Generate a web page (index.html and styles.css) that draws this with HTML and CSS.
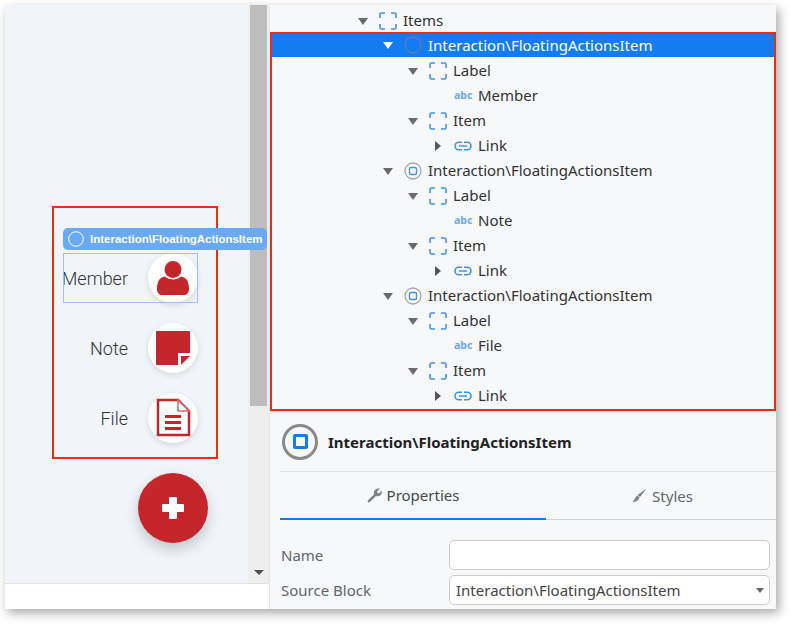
FILE: index.html
```html
<!DOCTYPE html>
<html lang="en">
<head>
    <meta charset="UTF-8">
    <title>Floating Actions</title>
    <link rel="stylesheet" href="styles.css">
</head>
<body>
<svg class="defs" width="0" height="0">
    <symbol id="ico-bracket" viewBox="0 0 18 18">
        <path d="M1 6V2.500A1.500 1.500 0 0 1 2.500 1H6M12 1h3.500A1.500 1.500 0 0 1 17 2.500V6M17 12v3.500a1.500 1.500 0 0 1-1.500 1.500H12M6 17H2.500A1.500 1.500 0 0 1 1 15.500V12" fill="none" stroke="#3f93ee" stroke-width="1.600"/>
    </symbol>
    <symbol id="ico-block" viewBox="0 0 18 18">
        <circle cx="9" cy="9" r="8" fill="none" stroke="#a5a5a5" stroke-width="1.300"/>
        <rect x="5.500" y="5.500" width="7" height="7" rx="1.500" fill="none" stroke="#3f93ee" stroke-width="1.400"/>
    </symbol>
    <symbol id="ico-link" viewBox="0 0 18 18">
        <path d="M8 5.250H4.750a3.750 3.750 0 0 0 0 7.500H8M10 5.250h3.250a3.750 3.750 0 0 1 0 7.500H10M5 9h8" fill="none" stroke="#3f93ee" stroke-width="1.600"/>
    </symbol>
</svg>

<div class="window">
    <div class="left">
        <div class="canvas">
            <div class="stage">
                <div class="action">
                    <span class="action-label">Member</span>
                    <span class="action-btn">
                        <svg width="32" height="34" viewBox="0 0 32 34"><circle cx="16" cy="8.500" r="8.500" fill="#c4262c"/><path d="M0 28c0-7 2.500-12 8-12.500 2.200 2 5 3 8 3s5.800-1 8-3c5.500.5 8 5.500 8 12.500 0 3.500-1.800 6-5 6H5c-3.200 0-5-2.500-5-6z" fill="#c4262c"/></svg>
                    </span>
                </div>
                <div class="action">
                    <span class="action-label">Note</span>
                    <span class="action-btn">
                        <svg width="36" height="36" viewBox="0 0 36 36"><path d="M2 1h32a1 1 0 0 1 1 1v21H23v12H2a1 1 0 0 1-1-1V2a1 1 0 0 1 1-1z" fill="#c4262c"/><path d="M26 26h9l-9 9z" fill="#c4262c"/></svg>
                    </span>
                </div>
                <div class="action">
                    <span class="action-label">File</span>
                    <span class="action-btn">
                        <svg width="36" height="40" viewBox="0 0 36 40"><path d="M3 2h20l11 11v24H3z" fill="#fff" stroke="#c4262c" stroke-width="2.500"/><path d="M23 2v11h11z" fill="#fff" stroke="#d9686c" stroke-width="1.500"/><path d="M10 17h16v3H10zM10 23h16v3H10zM10 29h16v3H10z" fill="#c4262c"/></svg>
                    </span>
                </div>
                <div class="fab">
                    <svg width="24" height="24" viewBox="0 0 24 24"><path d="M9 1h6a1 1 0 0 1 1 1v6h6a1 1 0 0 1 1 1v6a1 1 0 0 1-1 1h-6v6a1 1 0 0 1-1 1H9a1 1 0 0 1-1-1v-6H2a1 1 0 0 1-1-1V9a1 1 0 0 1 1-1h6V2a1 1 0 0 1 1-1z" fill="#fff"/></svg>
                </div>
            </div>
            <div class="scrollbar">
                <div class="thumb"></div>
                <div class="scroll-arrow"></div>
            </div>
        </div>
        <div class="statusbar"></div>
    </div>

    <div class="right">
        <div class="tree">
            <div class="row d0"><i class="arrow down"></i><svg class="ico"><use href="#ico-bracket"/></svg><span>Items</span></div>
            <div class="row d1 selected"><i class="arrow down"></i><svg class="ico" viewBox="0 0 18 18"><circle cx="9" cy="9" r="8" fill="none" stroke="#5c7fae" stroke-width="1.300"/></svg><span>Interaction\FloatingActionsItem</span></div>
            <div class="row d2"><i class="arrow down"></i><svg class="ico"><use href="#ico-bracket"/></svg><span>Label</span></div>
            <div class="row d3"><i class="arrow"></i><b class="abc">abc</b><span>Member</span></div>
            <div class="row d2"><i class="arrow down"></i><svg class="ico"><use href="#ico-bracket"/></svg><span>Item</span></div>
            <div class="row d3"><i class="arrow side"></i><svg class="ico"><use href="#ico-link"/></svg><span>Link</span></div>
            <div class="row d1"><i class="arrow down"></i><svg class="ico"><use href="#ico-block"/></svg><span>Interaction\FloatingActionsItem</span></div>
            <div class="row d2"><i class="arrow down"></i><svg class="ico"><use href="#ico-bracket"/></svg><span>Label</span></div>
            <div class="row d3"><i class="arrow"></i><b class="abc">abc</b><span>Note</span></div>
            <div class="row d2"><i class="arrow down"></i><svg class="ico"><use href="#ico-bracket"/></svg><span>Item</span></div>
            <div class="row d3"><i class="arrow side"></i><svg class="ico"><use href="#ico-link"/></svg><span>Link</span></div>
            <div class="row d1"><i class="arrow down"></i><svg class="ico"><use href="#ico-block"/></svg><span>Interaction\FloatingActionsItem</span></div>
            <div class="row d2"><i class="arrow down"></i><svg class="ico"><use href="#ico-bracket"/></svg><span>Label</span></div>
            <div class="row d3"><i class="arrow"></i><b class="abc">abc</b><span>File</span></div>
            <div class="row d2"><i class="arrow down"></i><svg class="ico"><use href="#ico-bracket"/></svg><span>Item</span></div>
            <div class="row d3"><i class="arrow side"></i><svg class="ico"><use href="#ico-link"/></svg><span>Link</span></div>
        </div>

        <div class="details">
            <div class="details-head">
                <span class="block-icon"><span></span></span>
                <strong>Interaction\FloatingActionsItem</strong>
            </div>
            <div class="tabs">
                <div class="tab active">
                    <svg width="15" height="15" viewBox="0 0 14 14"><path d="M1 13.500 0.500 12l6-6C6 4 6.500 2.500 8 1.300 9.200.4 10.800.2 12 .7L9.500 3l.3 1.700 1.700.3L13.700 2.500c.5 1.500.1 3-1 4-1.200 1.100-2.800 1.400-4.300.9l-6 6z" fill="#7d8288"/></svg>
                    Properties
                </div>
                <div class="tab">
                    <svg width="15" height="15" viewBox="0 0 15 14"><path d="M14.500 0 8 8.500 5.500 6.500zM5 7l2.500 2c-.5 2.500-3.500 4.500-7 4.500C2 12.500 3 9 5 7z" fill="#7d8288"/></svg>
                    Styles
                </div>
            </div>
            <div class="form">
                <div class="field">
                    <label>Name</label>
                    <div class="input"></div>
                </div>
                <div class="field">
                    <label>Source Block</label>
                    <div class="input select">Interaction\FloatingActionsItem<i class="arrow down small"></i></div>
                </div>
            </div>
        </div>
    </div>
</div>

<!-- annotations lying over the window -->
<div class="mark mark-left"></div>
<div class="mark mark-tree"></div>
<div class="sel-box"></div>
<div class="sel-tag">
    <svg width="16" height="16" viewBox="0 0 16 16"><circle cx="8" cy="8" r="7.300" fill="none" stroke="#fff" stroke-width="1"/></svg>
    Interaction\FloatingActionsItem
</div>
</body>
</html>
```

FILE: styles.css
```css
* {
    box-sizing: border-box;
}
html, body {
    margin: 0;
    padding: 0;
    height: 100%;
    overflow: hidden;
    background: #fff;
}
body {
    position: relative;
    font: 15px "Noto Sans", "Open Sans", sans-serif;
    color: #333;
}
.defs {
    position: absolute;
}
.window {
    display: flex;
    margin: 5px 0 0 5px;
    width: 771px;
    height: 604px;
    box-shadow: 3px 4px 10px rgba(0, 0, 0, .35);
    background: #fff;
}

/* left panel */
.left {
    display: flex;
    flex-direction: column;
    width: 265px;
    border-right: 1px solid #e4e6e8;
}
.canvas {
    display: flex;
    height: 579px;
    border-bottom: 1px solid #dfe1e3;
}
.stage {
    flex: 1;
    display: flex;
    flex-direction: column;
    align-items: flex-end;
    justify-content: flex-end;
    gap: 20px;
    padding: 0 50px 40px 0;
    background: #f1f5f9;
}
.action {
    display: flex;
    align-items: center;
    gap: 20px;
    height: 50px;
}
.action-label {
    font: 300 18px Roboto, sans-serif;
    color: #333;
}
.action-btn {
    display: flex;
    align-items: center;
    justify-content: center;
    width: 50px;
    height: 50px;
    border-radius: 50%;
    background: #fff;
    box-shadow: 0 2px 6px rgba(0, 0, 0, .12);
}
.fab {
    display: flex;
    align-items: center;
    justify-content: center;
    margin: 10px -10px 0 0;
    width: 70px;
    height: 70px;
    border-radius: 50%;
    background: #c4262c;
    box-shadow: 0 6px 14px rgba(0, 0, 0, .2);
}
.scrollbar {
    display: flex;
    flex-direction: column;
    justify-content: space-between;
    align-items: center;
    width: 21px;
    padding: 0 2px 8px 2px;
    background: #eee;
}
.thumb {
    width: 17px;
    height: 401px;
    background: #bdbdbd;
}
.scroll-arrow {
    border-left: 5px solid transparent;
    border-right: 5px solid transparent;
    border-top: 5px solid #505050;
}
.statusbar {
    flex: 1;
    background: #fff;
}

/* tree */
.right {
    flex: 1;
    display: flex;
    flex-direction: column;
    background: #f7f8fa;
}
.tree {
    height: 407px;
    padding-top: 3px;
    border-bottom: 1px solid #e4e6e8;
}
.row {
    display: flex;
    align-items: center;
    height: 25px;
    white-space: nowrap;
}
.row span {
    padding-bottom: 2px;
}
.row.d0 { padding-left: 81px; }
.row.d1 { padding-left: 106px; }
.row.d2 { padding-left: 131px; }
.row.d3 { padding-left: 156px; }
.row.selected {
    height: 24px;
    margin-bottom: 1px;
    background: #147cf2;
    color: #fff;
}
.row.selected span {
    padding-bottom: 0;
}
.arrow {
    flex: none;
    display: block;
    width: 25px;
    height: 0;
    position: relative;
}
.arrow.down::before {
    content: "";
    position: absolute;
    left: 7px;
    top: -3px;
    border-left: 5.5px solid transparent;
    border-right: 5.5px solid transparent;
    border-top: 7px solid #6b6b6b;
}
.selected .arrow.down::before {
    border-top-color: #fff;
}
.arrow.side::before {
    content: "";
    position: absolute;
    left: 9px;
    top: -5px;
    border-top: 5px solid transparent;
    border-bottom: 5px solid transparent;
    border-left: 6px solid #555;
}
.ico {
    flex: none;
    margin: 0 6px 0 3px;
    width: 18px;
    height: 18px;
}
.abc {
    flex: none;
    margin: 0 6px 0 3px;
    width: 18px;
    font: bold 10.500px "Noto Sans", sans-serif;
    color: #6aa8ef;
    position: relative;
    top: -1px;
}

/* details */
.details {
    flex: 1;
    padding: 0 6px 0 10px;
}
.details-head {
    display: flex;
    align-items: center;
    gap: 10px;
    margin-right: -6px;
    height: 60px;
    padding-left: 2px;
    border-bottom: 1px solid #e2e4e6;
}
.details-head strong {
    color: #222;
}
.block-icon {
    display: flex;
    align-items: center;
    justify-content: center;
    width: 36px;
    height: 36px;
    border: 3px solid #8a8a8a;
    border-radius: 50%;
}
.block-icon span {
    width: 15px;
    height: 15px;
    border: 3px solid #147cf2;
    border-radius: 2px;
}
.tabs {
    display: flex;
    margin-right: -6px;
    height: 48px;
    border-bottom: 1px solid #cfd1d3;
}
.tab {
    flex: 1;
    display: flex;
    align-items: center;
    justify-content: center;
    gap: 5px;
    padding-left: 3px;
    color: #5f666d;
}
.tab.active {
    flex: none;
    width: 266px;
    padding-left: 0;
    color: #444a50;
    border-bottom: 2px solid #147cf2;
    margin-bottom: -1px;
}
.form {
    display: flex;
    flex-direction: column;
    gap: 5px;
    margin-top: 20px;
}
.field {
    display: flex;
    align-items: center;
}
.field label {
    width: 169px;
    padding-left: 1px;
    color: #5f666d;
}
.input {
    flex: 1;
    display: flex;
    align-items: center;
    height: 30px;
    padding: 0 6px;
    background: #fff;
    border: 1px solid #ccc;
    border-radius: 5px;
    color: #444;
}
.select {
    justify-content: space-between;
}
.arrow.small {
    width: 8px;
}
.arrow.small::before {
    left: 1px;
    top: -2px;
    border-left-width: 4px;
    border-right-width: 4px;
    border-top-width: 5px;
    border-top-color: #666;
}

/* overlays */
.mark {
    position: absolute;
    border: 2px solid #f02d0a;
}
.mark-left {
    left: 52px;
    top: 206px;
    width: 166px;
    height: 253px;
}
.mark-tree {
    left: 270px;
    top: 32px;
    width: 506px;
    height: 379px;
}
.sel-box {
    position: absolute;
    left: 63px;
    top: 253px;
    width: 135px;
    height: 50px;
    border: 1px solid #98c4f2;
}
.sel-tag {
    position: absolute;
    left: 63px;
    top: 228px;
    display: flex;
    align-items: center;
    gap: 6px;
    width: 204px;
    height: 22px;
    padding-left: 5px;
    border-radius: 5px;
    background: #69a9f5;
    color: #fff;
    font: bold 11.500px "Liberation Sans", sans-serif;
    white-space: nowrap;
}
```
